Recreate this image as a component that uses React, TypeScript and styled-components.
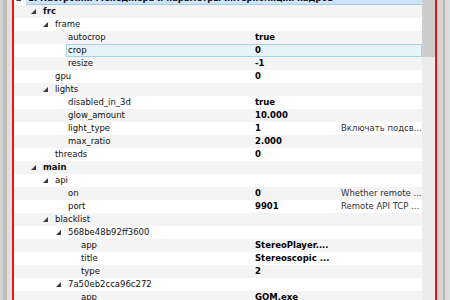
import styled, { createGlobalStyle, css } from "styled-components";

type RowState = "normal" | "selected" | "hover";

interface TreeRow {
  label: string;
  level: number;
  bold?: boolean;
  expanded?: boolean;
  value?: string;
  note?: string;
  state?: RowState;
  span?: boolean;
}

// x position of the label text for each depth, measured from the window edge
const TEXT_X = [28, 43, 55, 68, 81];
const TREE_LEFT = 14;
const VALUE_X = 255;

const rows: TreeRow[] = [
  {
    label: "1. Настройки Менеджера и параметры интерполяции кадров",
    level: 0,
    bold: true,
    expanded: true,
    state: "selected",
    span: true,
  },
  { label: "frc", level: 1, bold: true, expanded: true },
  { label: "frame", level: 2, expanded: true },
  { label: "autocrop", level: 3, value: "true" },
  { label: "crop", level: 3, value: "0", state: "hover" },
  { label: "resize", level: 3, value: "-1" },
  { label: "gpu", level: 2, value: "0" },
  { label: "lights", level: 2, expanded: true },
  { label: "disabled_in_3d", level: 3, value: "true" },
  { label: "glow_amount", level: 3, value: "10.000" },
  { label: "light_type", level: 3, value: "1", note: "Включать подсв..." },
  { label: "max_ratio", level: 3, value: "2.000" },
  { label: "threads", level: 2, value: "0" },
  { label: "main", level: 1, bold: true, expanded: true },
  { label: "api", level: 2, expanded: true },
  { label: "on", level: 3, value: "0", note: "Whether remote ..." },
  { label: "port", level: 3, value: "9901", note: "Remote API TCP ..." },
  { label: "blacklist", level: 2, expanded: true },
  { label: "568be48b92ff3600", level: 3, expanded: true },
  { label: "app", level: 4, value: "StereoPlayer...." },
  { label: "title", level: 4, value: "Stereoscopic ..." },
  { label: "type", level: 4, value: "2" },
  { label: "7a50eb2cca96c272", level: 3, expanded: true },
  { label: "app", level: 4, value: "GOM.exe" },
];

const GlobalStyle = createGlobalStyle`
  html, body {
    margin: 0;
    padding: 0;
    background: #d6d6d6;
  }
  body {
    width: 450px;
    height: 300px;
    overflow: hidden;
  }
`;

const Window = styled.div`
  display: flex;
  width: 450px;
  height: 300px;
  overflow: hidden;
  font-family: "DejaVu Sans", Tahoma, sans-serif;
  font-size: 8.5px;
  color: #111;
`;

const LeftChrome = styled.div`
  width: 12px;
  flex: none;
  background: linear-gradient(
    to right,
    #d2d2d2 0 3px,
    #bdbdbd 3px 7px,
    #e1e1e1 7px 12px
  );
`;

const RightChrome = styled.div`
  width: 13px;
  flex: none;
  background: linear-gradient(
    to right,
    #d4d4d4 0 6px,
    #b6b6b6 6px 8px,
    #dcdcdc 8px 13px
  );
`;

const RedEdge = styled.div`
  width: 2px;
  flex: none;
  background: #f01212;
`;

const TreeView = styled.div`
  flex: 1;
  min-width: 0;
  background: #ffffff;
  overflow: hidden;
`;

const TreeBody = styled.div`
  margin-top: -8px;
`;

const Row = styled.div<{ $odd: boolean }>`
  display: flex;
  height: 13px;
  background: ${(p) => (p.$odd ? "#f4f4f4" : "#ffffff")};
`;

const Branch = styled.div<{ $width: number }>`
  width: ${(p) => p.$width}px;
  flex: none;
  display: flex;
  justify-content: flex-end;
  align-items: center;
  padding-right: 5px;
  box-sizing: border-box;
`;

const Item = styled.div<{ $state: RowState; $nameWidth: number }>`
  flex: 1;
  min-width: 0;
  display: grid;
  grid-template-columns: ${(p) => p.$nameWidth}px 86px 1fr;
  align-items: center;
  line-height: 13px;
  ${(p) =>
    p.$state === "hover" &&
    css`
      background: #e5f3fb;
      box-shadow: inset 0 0 0 1px #a7d3f0;
    `}
  ${(p) =>
    p.$state === "selected" &&
    css`
      background: #cde3f8;
      box-shadow: inset 0 -1px 0 #a6c9ef;
    `}
`;

const NameCell = styled.div<{ $bold?: boolean; $span?: boolean }>`
  padding-left: 2px;
  white-space: nowrap;
  overflow: hidden;
  font-weight: ${(p) => (p.$bold ? 700 : 400)};
  ${(p) =>
    p.$span &&
    css`
      grid-column: 1 / -1;
    `}
`;

const ValueCell = styled.div`
  font-weight: 700;
  white-space: nowrap;
  overflow: hidden;
  color: #000;
`;

const NoteCell = styled.div`
  white-space: nowrap;
  overflow: hidden;
  color: #333;
`;

const ScrollBar = styled.div`
  width: 13px;
  flex: none;
  display: flex;
  flex-direction: column;
  background: #ececec;
`;

const Thumb = styled.div`
  height: 57px;
  background: #cdcdcd;
`;

function Expander() {
  return (
    <svg width="5" height="5" viewBox="0 0 5 5">
      <polygon points="5,0 5,5 0,5" fill="#3c3c3c" />
    </svg>
  );
}

function App() {
  return (
    <>
      <GlobalStyle />
      <Window>
        <LeftChrome />
        <RedEdge />
        <TreeView>
          <TreeBody>
            {rows.map((row, i) => {
              const textX = TEXT_X[row.level];
              return (
                <Row key={i} $odd={i % 2 === 1}>
                  <Branch $width={textX - 2 - TREE_LEFT}>
                    {row.expanded && <Expander />}
                  </Branch>
                  <Item
                    $state={row.state ?? "normal"}
                    $nameWidth={VALUE_X - (textX - 2)}
                  >
                    <NameCell $bold={row.bold} $span={row.span}>
                      {row.label}
                    </NameCell>
                    {!row.span && <ValueCell>{row.value}</ValueCell>}
                    {!row.span && <NoteCell>{row.note}</NoteCell>}
                  </Item>
                </Row>
              );
            })}
          </TreeBody>
        </TreeView>
        <ScrollBar>
          <Thumb />
        </ScrollBar>
        <RedEdge />
        <RightChrome />
      </Window>
    </>
  );
}

export default App;
